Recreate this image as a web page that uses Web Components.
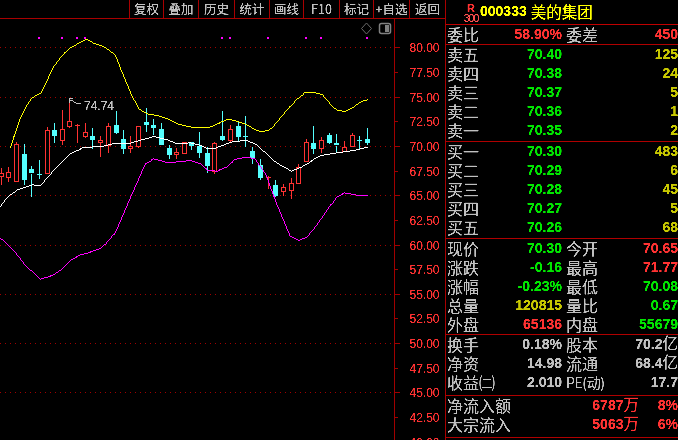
<!DOCTYPE html>
<html lang="zh">
<head>
<meta charset="utf-8">
<title>000333</title>
<style>
  html, body { margin: 0; background: #000; }
  body { width: 678px; height: 440px; overflow: hidden; font-family: "Noto Sans CJK SC", sans-serif; }
</style>
</head>
<body>
<kline-app>
  <kline-toolbar slot="toolbar">
    <tool-button w="34">复权</tool-button>
    <tool-button>叠加</tool-button>
    <tool-button w="36">历史</tool-button>
    <tool-button>统计</tool-button>
    <tool-button w="34">画线</tool-button>
    <tool-button w="36">F10</tool-button>
    <tool-button w="34">标记</tool-button>
    <tool-button w="36">+自选</tool-button>
    <tool-button w="36">返回</tool-button>
  </kline-toolbar>
  <kline-chart slot="chart"></kline-chart>
  <quote-panel slot="panel">
    <stock-title code="000333" name="美的集团"></stock-title>
    <quote-section>
      <quote-row a="委比" b="58.90%" bc="red" c="委差" d="450" dc="red"></quote-row>
    </quote-section>
    <quote-section pb="1">
      <quote-row a="卖五" b="70.40" bc="green" d="125" dc="olive"></quote-row>
      <quote-row a="卖四" b="70.38" bc="green" d="24" dc="olive"></quote-row>
      <quote-row a="卖三" b="70.37" bc="green" d="5" dc="olive"></quote-row>
      <quote-row a="卖二" b="70.36" bc="green" d="1" dc="olive"></quote-row>
      <quote-row a="卖一" b="70.35" bc="green" d="2" dc="olive"></quote-row>
    </quote-section>
    <quote-section pb="1">
      <quote-row a="买一" b="70.30" bc="green" d="483" dc="olive"></quote-row>
      <quote-row a="买二" b="70.29" bc="green" d="6" dc="olive"></quote-row>
      <quote-row a="买三" b="70.28" bc="green" d="45" dc="olive"></quote-row>
      <quote-row a="买四" b="70.27" bc="green" d="5" dc="olive"></quote-row>
      <quote-row a="买五" b="70.26" bc="green" d="68" dc="olive"></quote-row>
    </quote-section>
    <quote-section>
      <quote-row a="现价" b="70.30" bc="green" c="今开" d="70.65" dc="red"></quote-row>
      <quote-row a="涨跌" b="-0.16" bc="green" c="最高" d="71.77" dc="red"></quote-row>
      <quote-row a="涨幅" b="-0.23%" bc="green" c="最低" d="70.08" dc="green"></quote-row>
      <quote-row a="总量" b="120815" bc="olive" c="量比" d="0.67" dc="green"></quote-row>
      <quote-row a="外盘" b="65136" bc="red" c="内盘" d="55679" dc="green"></quote-row>
    </quote-section>
    <quote-section pb="3">
      <quote-row a="换手" b="0.18%" c="股本" d="70.2亿"></quote-row>
      <quote-row a="净资" b="14.98" c="流通" d="68.4亿"></quote-row>
      <quote-row a="收益㈡" b="2.010" c="PE(动)" d="17.7" small></quote-row>
    </quote-section>
    <quote-section pb="3">
      <flow-row a="净流入额" b="6787万" c="8%"></flow-row>
      <flow-row a="大宗流入" b="5063万" c="6%"></flow-row>
    </quote-section>
  </quote-panel>
</kline-app>

<script>
// pixel-font look: threshold the antialiased text
const CRISP = `<svg width="0" height="0" style="position:absolute"><filter id="crisp" x="0" y="0" width="100%" height="100%" color-interpolation-filters="sRGB"><feComponentTransfer><feFuncA type="linear" slope="2.6" intercept="-0.55"/></feComponentTransfer></filter></svg>`;

const COLORS = { red: '#ff3232', green: '#00e600', olive: '#c8c800', gray: '#c0c0c0' };

// units like 万 and 亿 are thin, the digits next to them bold
const num = (s) => s.replace(/[\u4e00-\u9fff]/g, '<i>$&</i>');

class KlineApp extends HTMLElement {
  constructor() {
    super();
    this.attachShadow({ mode: 'open' });
    this.shadowRoot.innerHTML = `
      <style>
        :host {
          display: grid;
          grid-template-columns: 445px 233px;
          grid-template-rows: 19px 421px;
          width: 678px;
          height: 440px;
          background: #000;
        }
        ::slotted([slot="toolbar"]) { grid-column: 1; grid-row: 1; }
        ::slotted([slot="chart"]) { grid-column: 1; grid-row: 2; }
        ::slotted([slot="panel"]) { grid-column: 2; grid-row: 1 / 3; }
      </style>
      <slot name="toolbar"></slot>
      <slot name="chart"></slot>
      <slot name="panel"></slot>
    `;
  }
}

class KlineToolbar extends HTMLElement {
  constructor() {
    super();
    this.attachShadow({ mode: 'open' });
    this.shadowRoot.innerHTML = `
      <style>
        :host {
          display: flex;
          justify-content: flex-end;
          height: 18px;
          border-bottom: 1px solid #a80000;
        }
      </style>
      <slot></slot>
    `;
  }
}

class ToolButton extends HTMLElement {
  constructor() {
    super();
    this.attachShadow({ mode: 'open' });
    this.shadowRoot.innerHTML = `
      ${CRISP}
      <style>
        :host {
          display: block;
          box-sizing: border-box;
          width: ${this.getAttribute('w') || 35}px;
          height: 18px;
          border-left: 1px solid #a80000;
          color: #c0c0c0;
          font: 12.5px/17px "Noto Sans CJK SC", sans-serif;
          text-align: center;
          white-space: nowrap;
        }
        span { filter: url(#crisp); display: block; }
      </style>
      <span><slot></slot></span>
    `;
  }
}

// [x, wickTop, bodyTop, bodyBottom, wickBottom, red?] read off the picture, y in px
const z = (v) => 100 + v / 3;
const CANDLES = [
  [1, 205, 218, 228, 255, 1], [8, 200, 217, 233, 245, 1], [16, 127, 132, 243, 245, 1], [24, 132, 162, 240, 255, 0],
  [31, 198, 208, 221, 290, 0], [39, 180, 222, 224, 237, 0], [47, 82, 91, 219, 219, 1], [54, 70, 90, 107, 130, 0],
  [62, 30, 88, 122, 135, 1], [69, 5, 64, 80, 85, 1], [77, 72, 75, 77, 130, 1], [85, 68, 97, 110, 113, 1],
  [92, 85, 108, 120, 148, 0], [100, 108, 121, 128, 170, 1], [108, 70, 79, 135, 160, 1], [116, 33, 75, 100, 102, 0],
  [123, 90, 117, 147, 162, 0], [130, 108, 139, 146, 160, 1], [138, 78, 79, 140, 143, 1], [146, 25, 66, 74, 96, 0],
  [153, 57, 75, 83, 105, 0], [161, 68, 87, 135, 135, 0], [169, 135, 144, 165, 178, 0], [176, 145, 157, 163, 178, 1],
  [184, 127, 127, 160, 162, 1], [191, 125, 127, 138, 150, 0], [199, 96, 138, 159, 175, 0], [207, 140, 159, 197, 220, 0],
  [214, 125, 130, 214, 222, 1], [222, 33, 108, 120, 122, 0], [230, 75, 88, 122, 125, 1], [238, 65, 78, 110, 125, 0],
  [245, 48, 109, 112, 140, 0], [252, 142, 153, 174, 192, 0], [260, 177, 195, 234, 240, 0], [268, 228, 232, 234, 267, 1],
  [275, 240, 255, 288, 290, 0], [283, 252, 260, 272, 288, 1], [291, 235, 250, 272, 297, 1], [298, 192, 200, 248, 248, 1],
  [306, 118, 127, 183, 185, 1], [313, 78, 130, 147, 162, 0], [321, 112, 121, 146, 158, 1], [329, 100, 106, 129, 132, 0],
  [336, 102, 130, 137, 158, 0], [344, 123, 142, 155, 157, 1], [352, 100, 106, 140, 140, 1], [359, 108, 120, 122, 147, 0],
  [367, 85, 117, 129, 135, 0],
];

// points were read from 3x crops, ox/oy put them back in chart pixels
const pts = (list, ox = 0, oy = 0) => list.map(([x, y]) => [ox + x / 3, oy + y / 3]);

const UPPER = [
  ...pts([[30,441],[45,395],[60,350],[75,320],[95,292],[120,278],[140,240],[160,197],[185,165],[210,142],[235,128],[258,117],[280,128],[300,135],[325,147],[345,165],[365,215],[390,275],[415,325],[440,340],[470,345],[500,355],[530,370],[560,378],[590,382],[625,382],[650,370],[678,358]], 0, -19),
  ...pts([[10,357],[30,362],[60,372],[80,385],[105,394],[130,388],[160,355],[185,325],[210,297],[238,275],[265,276],[290,284],[310,310],[330,328],[355,334],[380,320],[405,303],[422,298]], 226, -19),
];
const MIDDLE = [
  ...pts([[0,317],[20,290],[50,268],[95,253],[120,256],[165,205],[210,160],[250,140],[300,139],[345,128],[390,128],[420,119],[460,108],[500,118],[530,130],[570,127],[600,135],[620,145],[645,143],[678,130]], 0, 81),
  ...pts([[20,123],[60,120],[90,132],[120,160],[150,187],[195,212],[225,200],[265,175],[285,165],[330,157],[380,150],[422,140]], 226, 81),
];
const LOWER = [
  ...pts([[0,-5],[10,0],[40,30],[75,75],[120,116],[160,103],[185,85],[210,60],[235,45],[260,38],[300,24],[325,0]], 0, 221),
  ...pts([[345,395],[390,290],[435,190],[460,175],[505,187],[570,180],[600,190],[622,210],[650,212],[678,200]], 0, 81),
  ...pts([[25,177],[60,170],[85,175],[120,225],[150,310],[190,405],[217,420],[240,410],[270,375],[330,290],[355,277],[395,285],[422,286]], 226, 81),
];

// the terminal draws its lines without antialiasing: one pixel per step
function pixelLine(list) {
  let d = '';
  for (let i = 0; i < list.length - 1; i++) {
    const [x0, y0] = list[i], [x1, y1] = list[i + 1];
    const n = Math.max(1, Math.ceil(Math.max(Math.abs(x1 - x0), Math.abs(y1 - y0))));
    for (let k = 0; k <= n; k++) {
      const x = Math.round(x0 + (x1 - x0) * k / n);
      const y = Math.round(y0 + (y1 - y0) * k / n);
      d += `M${x} ${y}h1v1h-1z`;
    }
  }
  return d;
}

class KlineChart extends HTMLElement {
  constructor() {
    super();
    this.attachShadow({ mode: 'open' });
    const R = '#ff3232', C = '#54ffff';
    let grid = '', axis = '';
    for (let i = 0; i < 17; i++) {
      const p = 80 - i * 2.5;
      const y = Math.round(28.3 + i * 24.65) + 0.5;
      if (i % 2 === 0) {
        grid += `<line x1="0" x2="394" y1="${y}" y2="${y}" stroke="#a00000" stroke-dasharray="1 4"/>`;
      }
      axis += `<line x1="394" x2="${i % 2 === 0 ? 400 : 398}" y1="${y}" y2="${y}" stroke="#a00000"/>`;
      axis += `<text x="409.5" y="${y + 4.5}">${p.toFixed(2)}</text>`;
    }
    const candles = CANDLES.map(([x, wt, bt, bb, wb, red]) => {
      const col = red ? R : C;
      const cx = x + 0.5;
      const t = z(bt) - 19, b = z(bb) - 19;
      const snap = (v) => Math.round(v) + 0.5;
      let s = `<line x1="${cx}" x2="${cx}" y1="${Math.round(z(wt) - 19)}" y2="${Math.round(t)}" stroke="${col}"/>`;
      s += `<line x1="${cx}" x2="${cx}" y1="${Math.round(b)}" y2="${Math.round(z(wb) - 19)}" stroke="${col}"/>`;
      if (b - t < 2) {
        s += `<line x1="${x - 2}" x2="${x + 3}" y1="${snap(t)}" y2="${snap(t)}" stroke="${col}"/>`;
      } else if (red) {
        s += `<rect x="${x - 2 + 0.5}" y="${snap(t)}" width="4" height="${Math.round(b - t)}" fill="#000" stroke="${col}"/>`;
      } else {
        s += `<rect x="${x - 2}" y="${Math.round(t)}" width="5" height="${Math.round(b - t)}" fill="${col}"/>`;
      }
      return s;
    }).join('');
    const marks = [39, 62, 77, 85, 222, 230, 268, 306, 321, 367]
      .map((x) => `<rect x="${x - 1}" y="18" width="2" height="2" fill="#ff00ff"/>`).join('');
    this.shadowRoot.innerHTML = `
      ${CRISP}
      <style>
        :host { display: block; width: 445px; height: 421px; overflow: hidden; }
        svg.plot { display: block; shape-rendering: crispEdges; }
        text { font: 12px "Liberation Sans", sans-serif; fill: ${R}; filter: url(#crisp); }
        text.hi { fill: #c0c0c0; }
      </style>
      <svg class="plot" width="445" height="421" viewBox="0 0 445 421">
        ${grid}
        ${candles}
        <path d="${pixelLine(UPPER)}" fill="#ffff00"/>
        <path d="${pixelLine(MIDDLE)}" fill="#ffffff"/>
        <path d="${pixelLine(LOWER)}" fill="#ff00ff"/>
        ${marks}
        <line x1="394.5" x2="394.5" y1="0" y2="421" stroke="#a00000"/>
        ${axis}
        <path d="M69.5 79V84M69.5 79H73M69.5 81.5H72M71 81L76 84H81" fill="none" stroke="#c0c0c0"/>
        <text class="hi" x="84" y="90.5">74.74</text>
        <path d="M366.5 4L371.5 9.5L366.5 15L361.5 9.5Z" fill="none" stroke="#6a6a6a" shape-rendering="auto"/>
        <rect x="379.5" y="4.5" width="11" height="10" rx="2" fill="#000" stroke="#808080" stroke-width="1.5" shape-rendering="auto"/>
        <rect x="385" y="6" width="4" height="7" fill="#808080"/>
      </svg>
    `;
  }
}

class QuotePanel extends HTMLElement {
  constructor() {
    super();
    this.attachShadow({ mode: 'open' });
    this.shadowRoot.innerHTML = `
      <style>
        :host {
          display: block;
          box-sizing: border-box;
          width: 233px;
          height: 440px;
          border-left: 1px solid #a80000;
          overflow: hidden;
        }
      </style>
      <slot></slot>
    `;
  }
}

class StockTitle extends HTMLElement {
  constructor() {
    super();
    this.attachShadow({ mode: 'open' });
    this.shadowRoot.innerHTML = `
      ${CRISP}
      <style>
        :host {
          display: flex;
          align-items: center;
          box-sizing: border-box;
          height: 25px;
          padding: 0 0 2px 18px;
          border-bottom: 1px solid #c00000;
        }
        .tag {
          display: flex;
          flex-direction: column;
          align-items: center;
          width: 14px;
          margin: 3px 2px 0 0;
          color: #ff3232;
          font-family: "Liberation Sans", sans-serif;
          filter: url(#crisp);
        }
        .tag b { font-size: 11px; line-height: 10px; }
        .tag span { font-size: 10.5px; line-height: 10px; letter-spacing: -1px; color: #ff5050; }
        .code {
          color: #ffff00;
          font: bold 14px "Liberation Sans", sans-serif;
          filter: url(#crisp);
        }
        .name {
          color: #ffff00;
          margin-left: 4px;
          font: 15.5px/20px "Noto Sans CJK SC", sans-serif;
          filter: url(#crisp);
        }
      </style>
      <div class="tag"><b>R</b><span>300</span></div>
      <span class="code">${this.getAttribute('code')}</span>
      <span class="name">${this.getAttribute('name')}</span>
    `;
  }
}

class QuoteSection extends HTMLElement {
  constructor() {
    super();
    this.attachShadow({ mode: 'open' });
    this.shadowRoot.innerHTML = `
      <style>
        :host {
          display: block;
          padding-bottom: ${this.getAttribute('pb') || 0}px;
          border-bottom: 1px solid #b00000;
        }
      </style>
      <slot></slot>
    `;
  }
}

class QuoteRow extends HTMLElement {
  constructor() {
    super();
    this.attachShadow({ mode: 'open' });
    const at = (n) => this.getAttribute(n) || '';
    const col = (n) => COLORS[at(n)] || COLORS.gray;
    this.shadowRoot.innerHTML = `
      ${CRISP}
      <style>
        :host {
          display: grid;
          grid-template-columns: 51px 64px 31px 1fr;
          height: 19px;
          padding-left: 1px;
          white-space: nowrap;
          font: 16px/19px "Noto Sans CJK SC", sans-serif;
          color: #c0c0c0;
        }
        span { filter: url(#crisp); }
        .num {
          font: bold 14px/19px "Liberation Sans", "Noto Sans CJK SC", sans-serif;
          text-align: right;
        }
        .num i { font: normal 15.5px/0 "Noto Sans CJK SC", sans-serif; }
        .lab2 { margin-left: 4px; }
        :host([small]) .lab2 { font-size: 14px; letter-spacing: -0.4px; }
      </style>
      <span>${at('a')}</span>
      <span class="num" style="color:${col('bc')}">${at('b')}</span>
      <span class="lab2">${at('c')}</span>
      <span class="num" style="color:${col('dc')}">${num(at('d'))}</span>
    `;
  }
}

class FlowRow extends HTMLElement {
  constructor() {
    super();
    this.attachShadow({ mode: 'open' });
    const at = (n) => this.getAttribute(n) || '';
    this.shadowRoot.innerHTML = `
      ${CRISP}
      <style>
        :host {
          display: grid;
          grid-template-columns: 80px 112px 1fr;
          height: 19px;
          padding-left: 1px;
          white-space: nowrap;
          font: 16px/19px "Noto Sans CJK SC", sans-serif;
          color: #c0c0c0;
        }
        span { filter: url(#crisp); }
        .num {
          color: #ff3232;
          font: bold 14px/19px "Liberation Sans", "Noto Sans CJK SC", sans-serif;
          text-align: right;
        }
        .num i { font: normal 15.5px/0 "Noto Sans CJK SC", sans-serif; }
      </style>
      <span>${at('a')}</span>
      <span class="num">${num(at('b'))}</span>
      <span class="num">${at('c')}</span>
    `;
  }
}

customElements.define('kline-app', KlineApp);
customElements.define('kline-toolbar', KlineToolbar);
customElements.define('tool-button', ToolButton);
customElements.define('kline-chart', KlineChart);
customElements.define('quote-panel', QuotePanel);
customElements.define('stock-title', StockTitle);
customElements.define('quote-section', QuoteSection);
customElements.define('quote-row', QuoteRow);
customElements.define('flow-row', FlowRow);
</script>
</body>
</html>
